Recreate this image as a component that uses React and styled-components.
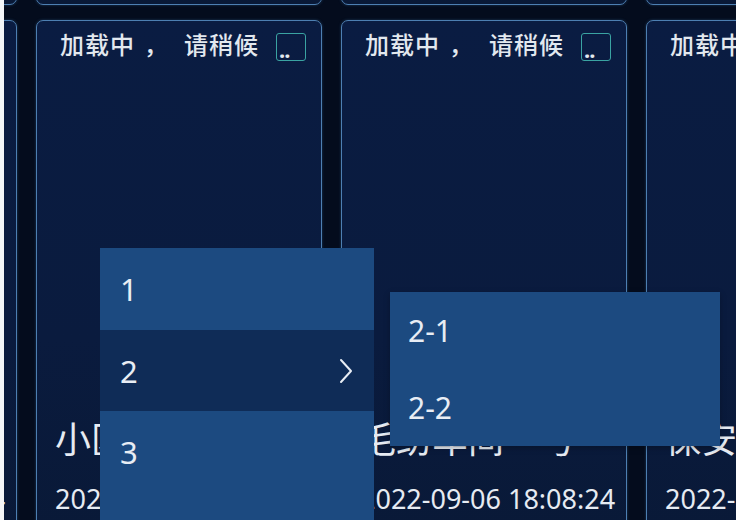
import React from 'react';
import styled, { createGlobalStyle } from 'styled-components';

const GlobalStyle = createGlobalStyle`
  html, body {
    margin: 0;
    padding: 0;
    width: 736px;
    height: 520px;
    overflow: hidden;
    background: #040c1d;
  }
  body {
    font-family: "Noto Sans", "Noto Sans CJK SC", sans-serif;
    color: #e6ebf2;
  }
`;

const Screen = styled.div`
  position: relative;
  width: 736px;
  height: 520px;
  overflow: hidden;
  border-left: 4px solid #f4f6f8;
  box-sizing: border-box;
  background: #040c1d;
`;

const Grid = styled.div`
  display: grid;
  grid-template-columns: repeat(4, 286px);
  grid-auto-rows: 530px;
  column-gap: 19px;
  row-gap: 15px;
  margin-left: -273px;
  margin-top: -525px;
`;

const Card = styled.div`
  display: flex;
  flex-direction: column;
  box-sizing: border-box;
  padding: 0 18px 32px;
  border: 1.5px solid #4d7fb2;
  border-radius: 7px;
  background: linear-gradient(180deg, #0a1c42 0%, #0a1b3e 60%, #091937 100%);
  box-shadow: 0 0 3px rgba(80, 140, 200, 0.35);
  overflow: hidden;
`;

const Placeholder = styled.div`
  flex: 1;
  padding: 6px 0 0 5px;
  font-family: "Noto Sans CJK SC", sans-serif;
  font-size: 24px;
  font-weight: 500;
  letter-spacing: 1px;
  line-height: 34px;
  color: #e2e8ef;
  white-space: nowrap;
`;

const Comma = styled.span`
  padding-left: 9px;
  margin-right: 15px;
`;

const Dots = styled.span`
  display: inline-block;
  margin-left: 17px;
  width: 30px;
  height: 28px;
  line-height: 30px;
  border: 1.5px solid #3aa3a2;
  border-radius: 3px;
  box-sizing: border-box;
  padding-left: 2px;
  vertical-align: middle;
  letter-spacing: -1px;
  font-family: "Noto Sans", sans-serif;
  font-size: 22px;
  font-weight: 700;
`;

const Title = styled.div`
  font-family: "Noto Sans CJK SC", sans-serif;
  font-size: 36px;
  line-height: 44px;
  white-space: nowrap;
`;

const Time = styled.div`
  margin-top: 22px;
  font-size: 27px;
  line-height: 36px;
  white-space: nowrap;
`;

const Menu = styled.div`
  position: absolute;
  left: 96px;
  top: 248px;
  width: 274px;
  background: #1c4a80;
  font-family: "Noto Sans", sans-serif;
`;

const Item = styled.div`
  position: relative;
  display: flex;
  align-items: center;
  justify-content: space-between;
  height: ${p => p.$h || 81}px;
  padding: 0 20px 0 20px;
  font-size: 31px;
  color: #e8edf4;
  background: ${p => (p.$active ? '#0f2c57' : '#1c4a80')};
`;

const SubMenu = styled.div`
  position: absolute;
  left: calc(100% + 16px);
  top: -38px;
  width: 330px;
  background: #1c4a80;
  box-shadow: 0 2px 6px rgba(0, 0, 0, 0.25);
`;

const SubItem = styled.div`
  display: flex;
  align-items: center;
  height: 77px;
  padding: 0 18px;
  font-size: 30px;
  color: #e8edf4;
`;

const Chevron = () => (
  <svg width="16" height="26" viewBox="0 0 16 26" fill="none">
    <path d="M3 2 L13 13 L3 24" stroke="#e8edf4" strokeWidth="2" strokeLinecap="round" strokeLinejoin="round" />
  </svg>
);

const cameras = [
  { title: '东侧通道', time: '2022-09-06 18:08:24' },
  { title: '小区东门入口', time: '2022-09-06 18:08:24' },
  { title: '毛纺车间一号', time: '2022-09-06 18:08:24' },
  { title: '保安室门口', time: '2022-09-06 18:08:24' },
];

const CameraCard = ({ title, time }) => (
  <Card>
    <Placeholder>
      加载中<Comma>，</Comma>请稍候<Dots>..</Dots>
    </Placeholder>
    <Title>{title}</Title>
    <Time>{time}</Time>
  </Card>
);

const App = () => (
  <>
    <GlobalStyle />
    <Screen>
      <Grid>
        {cameras.map((c, i) => (
          <CameraCard key={'a' + i} {...c} />
        ))}
        {cameras.map((c, i) => (
          <CameraCard key={'b' + i} {...c} />
        ))}
      </Grid>
      <Menu>
        <Item $h={82}>1</Item>
        <Item $active>
          2
          <Chevron />
          <SubMenu>
            <SubItem>2-1</SubItem>
            <SubItem>2-2</SubItem>
          </SubMenu>
        </Item>
        <Item $h={82}>3</Item>
        <Item $h={82}>4</Item>
      </Menu>
    </Screen>
  </>
);

export default App;
